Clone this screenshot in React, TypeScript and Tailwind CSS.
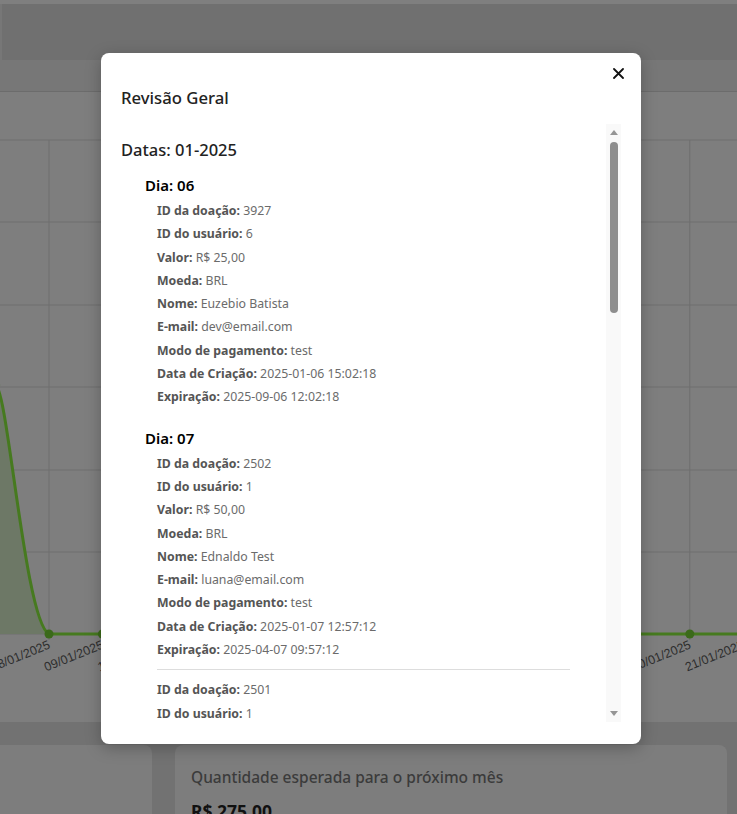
import React from "react";

type Donation = {
  id: string;
  user: string;
  valor: string;
  nome: string;
  email: string;
  criacao: string;
  expiracao: string;
};

type Day = { dia: string; items: Donation[] };
type Month = { data: string; days: Day[] };

const months: Month[] = [
  {
    data: "01-2025",
    days: [
      {
        dia: "06",
        items: [
          { id: "3927", user: "6", valor: "R$ 25,00", nome: "Euzebio Batista", email: "dev@email.com", criacao: "2025-01-06 15:02:18", expiracao: "2025-09-06 12:02:18" },
        ],
      },
      {
        dia: "07",
        items: [
          { id: "2502", user: "1", valor: "R$ 50,00", nome: "Ednaldo Test", email: "luana@email.com", criacao: "2025-01-07 12:57:12", expiracao: "2025-04-07 09:57:12" },
          { id: "2501", user: "1", valor: "R$ 50,00", nome: "Ednaldo Test", email: "luana@email.com", criacao: "2025-01-07 12:55:40", expiracao: "2025-04-07 09:55:40" },
        ],
      },
    ],
  },
];

function Row({ label, value }: { label: string; value: string }) {
  return (
    <div className="text-[12.3px] leading-[23.3px] text-[#6b6b6b] whitespace-nowrap">
      <span className="font-bold text-[#555555]">{label}:</span> {value}
    </div>
  );
}

const X0 = 49;
const STEP = 53.4;
const dates = ["07", "08", "09", "10", "11", "12", "13", "14", "15", "16", "17", "18", "19", "20", "21"];

function Chart() {
  const gridY = [48, 130, 213, 295, 378, 460, 542];
  return (
    <svg width="737" height="630" viewBox="0 0 737 630" className="block">
      {gridY.map((y) => (
        <line key={y} x1="0" x2="737" y1={y} y2={y} stroke="#6e6e6e" strokeWidth="1" />
      ))}
      {dates.map((d, i) => {
        const x = X0 + (i - 1) * STEP;
        return <line key={"v" + d} x1={x} x2={x} y1="48" y2="548" stroke="#6e6e6e" strokeWidth="1" />;
      })}
      <path d="M -4.4 293 C 8 298, 25 530, 49 542 L -4.4 542 Z" fill="#6d7866" />
      <path d="M -4.4 293 C 8 298, 25 530, 49 542 L 737 542" fill="none" stroke="#467a1f" strokeWidth="3" />
      {dates.map((d, i) => {
        const x = X0 + (i - 1) * STEP;
        const y = i === 0 ? 293 : 542;
        return <circle key={"c" + d} cx={x} cy={y} r="4.5" fill="#3b6a1a" />;
      })}
      {dates.map((d, i) => {
        const x = X0 + (i - 1) * STEP + 2;
        const y = 556;
        return (
          <text
            key={"t" + d}
            x={x}
            y={y}
            textAnchor="end"
            transform={`rotate(-22 ${x} ${y})`}
            fontFamily="'Liberation Sans', Arial, sans-serif"
            fontSize="12.5"
            fill="#2e2e2e"
          >
            {d}/01/2025
          </text>
        );
      })}
    </svg>
  );
}

function Scrollbar() {
  return (
    <div className="w-[15px] h-full bg-[#f9f9f9] flex flex-col items-center">
      <div className="h-[17px] w-full flex items-center justify-center">
        <svg width="8" height="5" viewBox="0 0 8 5">
          <path d="M0 5 L4 0 L8 5 Z" fill="#959595" />
        </svg>
      </div>
      <div className="h-[171px] w-[8px] rounded-full bg-[#8e8e8e] mt-[1px]" />
      <div className="flex-1" />
      <div className="h-[17px] w-full flex items-center justify-center">
        <svg width="8" height="5" viewBox="0 0 8 5">
          <path d="M0 0 L8 0 L4 5 Z" fill="#959595" />
        </svg>
      </div>
    </div>
  );
}

export default function App() {
  return (
    <div className="relative w-[737px] h-[814px] overflow-hidden bg-[#727272] font-['Noto_Sans',sans-serif]">
      {/* background page (dimmed) */}
      <div className="h-[4px] bg-[#7f7f7f]" />
      <div className="h-[56px] bg-[#707070] border-l-2 border-[#777777]" />
      <div className="h-[32px] bg-[#777777] border-b border-[#6c6c6c]" />
      <div className="h-[630px] bg-[#7e7e7e]">
        <Chart />
      </div>
      <div className="flex gap-[23px] mt-[23px]">
        <div className="w-[152px] h-[69px] bg-[#7d7d7d] rounded-tr-lg" />
        <div className="w-[552px] h-[69px] bg-[#7d7d7d] rounded-t-lg px-[16px] pt-[20px] overflow-hidden">
          <div className="text-[15.5px] font-medium text-[#3b3b3b] leading-[24px]">Quantidade esperada para o próximo mês</div>
          <div className="mt-[9px] text-[17.5px] font-bold text-[#111] leading-[26px]">R$ 275,00</div>
        </div>
      </div>

      {/* modal */}
      <div className="absolute left-[101px] top-[53px] w-[540px] h-[691px] bg-white rounded-[8px] shadow-[0_4px_16px_rgba(0,0,0,0.25)] px-[20px] pt-[13px] pb-[22px] flex flex-col">
        <div className="flex justify-end h-[14px]">
          <button className="w-[14px] h-[14px] flex items-center justify-center mr-[-4px]">
            <svg width="11" height="11" viewBox="0 0 11 11">
              <path d="M1 1 L10 10 M10 1 L1 10" stroke="#111" strokeWidth="1.8" strokeLinecap="round" />
            </svg>
          </button>
        </div>
        <h2 className="mt-[6px] text-[16.7px] leading-[24px] font-medium text-[#222]">Revisão Geral</h2>
        <div className="mt-[14px] h-[598px] flex">
          <div className="flex-1 overflow-hidden">
            {months.map((m) => (
              <div key={m.data} className="pt-[13px]">
                <h3 className="text-[16.5px] leading-[26px] font-medium text-[#222]">Datas: {m.data}</h3>
                <div className="mt-[10px]">
                  {m.days.map((d) => (
                    <div key={d.dia} className="ml-[24px] mb-[17px]">
                      <h4 className="text-[15px] leading-[24px] font-semibold text-black">Dia: {d.dia}</h4>
                      <div className="ml-[12px] mr-[36px] mt-[2px]">
                        {d.items.map((it, idx) => (
                          <div key={it.id}>
                            {idx > 0 && <div className="mt-[8px] mb-[8px] border-t border-[#dddddd]" />}
                            <Row label="ID da doação" value={it.id} />
                            <Row label="ID do usuário" value={it.user} />
                            <Row label="Valor" value={it.valor} />
                            <Row label="Moeda" value="BRL" />
                            <Row label="Nome" value={it.nome} />
                            <Row label="E-mail" value={it.email} />
                            <Row label="Modo de pagamento" value="test" />
                            <Row label="Data de Criação" value={it.criacao} />
                            <Row label="Expiração" value={it.expiracao} />
                          </div>
                        ))}
                      </div>
                    </div>
                  ))}
                </div>
              </div>
            ))}
          </div>
          <Scrollbar />
        </div>
      </div>
    </div>
  );
}
